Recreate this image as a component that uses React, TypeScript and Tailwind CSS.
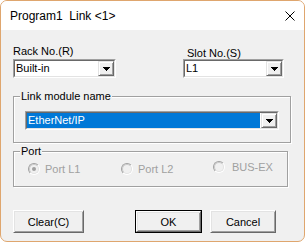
import type { ReactNode } from 'react';

const font = "font-['Liberation_Sans',Arial,sans-serif]";

function Arrow() {
  return (
    <div className="flex h-full w-[16px] items-center justify-center border border-t-[#e3e3e3] border-l-[#e3e3e3] border-r-[#696969] border-b-[#696969] bg-[#f0f0f0] shadow-[inset_1px_1px_0_#fff,inset_-1px_-1px_0_#a0a0a0]">
      <svg width="7" height="4" viewBox="0 0 7 4" shapeRendering="crispEdges">
        <rect x="0" y="0" width="7" height="1" fill="#000" />
        <rect x="1" y="1" width="5" height="1" fill="#000" />
        <rect x="2" y="2" width="3" height="1" fill="#000" />
        <rect x="3" y="3" width="1" height="1" fill="#000" />
      </svg>
    </div>
  );
}

function Combo({ value, className, selected }: { value: string; className: string; selected?: boolean }) {
  return (
    <div className={`flex h-[19px] border border-t-[#a0a0a0] border-l-[#a0a0a0] border-r-white border-b-white ${className}`}>
      <div className="flex flex-1 border border-t-[#696969] border-l-[#696969] border-r-[#e3e3e3] border-b-[#e3e3e3] bg-white">
        <div
          className={`mr-[1px] flex-1 pl-[1px] text-[11px] leading-[15px] ${
            selected ? 'bg-[#0078d7] text-white' : 'text-black'
          }`}
        >
          {value}
        </div>
        <Arrow />
      </div>
    </div>
  );
}

function Group({ label, children, className }: { label: string; children: ReactNode; className: string }) {
  return (
    <fieldset
      className={`w-[275px] border border-[#a0a0a0] shadow-[1px_1px_0_#fff,inset_1px_1px_0_#fff] ${className}`}
    >
      <legend className="ml-[6px] bg-[#f0f0f0] px-[1px] text-[11px] leading-[14px] text-black">{label}</legend>
      {children}
    </fieldset>
  );
}

function Radio({ label, checked, className, gap }: { label: string; checked?: boolean; className?: string; gap?: string }) {
  return (
    <div className={`flex items-center ${className ?? ''}`}>
      <div className="h-[12px] w-[12px] rounded-full border border-t-[#a0a0a0] border-l-[#a0a0a0] border-r-white border-b-white">
        <div className="flex h-full w-full items-center justify-center rounded-full border border-t-[#c8c8c8] border-l-[#c8c8c8] border-r-[#e3e3e3] border-b-[#e3e3e3] bg-[#f0f0f0]">
          {checked ? <div className="h-[4px] w-[4px] rounded-full bg-[#a0a0a0]" /> : null}
        </div>
      </div>
      <span className={`${gap ?? 'ml-[5px]'} text-[11px] leading-[14px] text-[#a0a0a0]`}>{label}</span>
    </div>
  );
}

function Button({ label, className, isDefault }: { label: string; className: string; isDefault?: boolean }) {
  const inner = (
    <div className="flex h-full w-full items-center justify-center border border-t-white border-l-white border-r-[#696969] border-b-[#696969] bg-[#f0f0f0] shadow-[inset_1px_1px_0_#e3e3e3,inset_-1px_-1px_0_#a0a0a0] text-[11px] leading-[14px] text-black">
      {label}
    </div>
  );
  return isDefault ? (
    <div className={`h-[23px] border border-black ${className}`}>{inner}</div>
  ) : (
    <div className={`h-[23px] ${className}`}>{inner}</div>
  );
}

export default function App() {
  return (
    <div className={`${font} flex h-[242px] w-[305px] flex-col overflow-hidden rounded-[7px] border border-[#dfa66e] bg-[#f0f0f0]`}>
      <div className="flex h-[29px] shrink-0 items-center justify-between bg-white pl-[9px] pr-[9px]">
        <span className="whitespace-pre text-[12px] leading-[14px] text-black">Program1  Link {'<1>'}</span>
        <svg width="10" height="10" viewBox="0 0 10 10">
          <path d="M0.5 0.5 L9.5 9.5 M9.5 0.5 L0.5 9.5" stroke="#000" strokeWidth="1" />
        </svg>
      </div>

      <div className="flex flex-col pl-[12px] pt-[14px]">
        <div className="flex items-end">
          <div className="flex w-[103px] flex-col">
            <div className="mb-[1px] text-[11px] leading-[14px] text-black">Rack No.(R)</div>
            <Combo value="Built-in" className="w-[103px]" />
          </div>
          <div className="ml-[67px] flex w-[101px] flex-col">
            <div className="pl-[4px] text-[11px] leading-[12px] text-black">Slot No.(S)</div>
            <Combo value="L1" className="w-[101px]" />
          </div>
        </div>

        <Group label="Link module name" className="mt-[11px]">
          <div className="px-[11px] pb-[12px] pt-[8px]">
            <Combo value="EtherNet/IP" className="w-[254px]" selected />
          </div>
        </Group>

        <Group label="Port" className="mt-[1px]">
          <div className="flex items-start pb-[10px] pl-[14px] pt-[4px]">
            <Radio label="Port L1" checked className="w-[93px]" />
            <Radio label="Port L2" className="w-[92px]" />
            <Radio label="BUS-EX" className="-mt-[2px]" gap="ml-[7px]" />
          </div>
        </Group>

        <div className="mt-[23px] flex">
          <Button label="Clear(C)" className="w-[71px]" />
          <Button label="OK" className="ml-[51px] w-[67px]" isDefault />
          <Button label="Cancel" className="ml-[8px] w-[66px]" />
        </div>
      </div>
    </div>
  );
}
